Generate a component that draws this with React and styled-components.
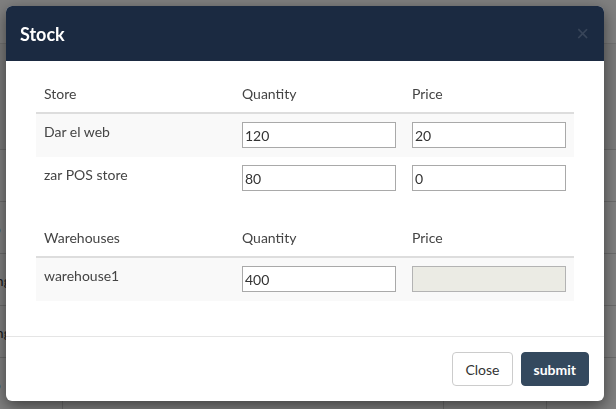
import React from 'react';
import styled, { createGlobalStyle } from 'styled-components';

const GlobalStyle = createGlobalStyle`
  html, body {
    margin: 0;
    padding: 0;
    height: 100%;
    overflow: hidden;
    background: #ffffff;
    font-family: 'Lato', 'Liberation Sans', sans-serif;
    font-size: 14px;
    color: #333;
  }
  * { box-sizing: border-box; }
`;

// page behind the modal
const Page = styled.div`
  width: 616px;
  height: 409px;
  overflow: hidden;
  display: flex;
  flex-direction: column;
`;

const TopBar = styled.div`
  height: 60px;
  background: #ffffff;
  border-bottom: 1px solid #e2e2e2;
`;

const PageBody = styled.div`
  flex: 1;
  background: #f4f4f4;
  padding-top: 105px;
  margin-left: -54px;
`;

const BgTable = styled.div`
  display: grid;
  grid-template-columns: 116px 381px 103px 120px;
`;

const BgCell = styled.div`
  height: 52px;
  padding: 18px 10px 0;
  border-top: 1px solid #d6d6d6;
  border-left: ${(p) => (p.first ? 'none' : '1px solid #d6d6d6')};
  background: #ffffff;
  color: #333;
  white-space: nowrap;
  overflow: hidden;
  text-align: ${(p) => (p.right ? 'right' : 'left')};
`;

// modal
const Overlay = styled.div`
  position: fixed;
  inset: 0;
  background: rgba(0, 0, 0, 0.5);
  padding: 6px 0 0 6px;
`;

const Modal = styled.div`
  width: 598px;
  background: #ffffff;
  border-radius: 6px;
  box-shadow: 0 5px 15px rgba(0, 0, 0, 0.5);
  overflow: hidden;
`;

const Header = styled.div`
  height: 55px;
  background: #1b2a41;
  display: flex;
  align-items: center;
  justify-content: space-between;
  padding: 0 15px 0 14px;
`;

const Title = styled.h4`
  margin: 0;
  color: #ffffff;
  font-size: 18px;
  font-weight: 700;
  line-height: 1;
`;

const CloseX = styled.span`
  color: rgba(255, 255, 255, 0.13);
  font-size: 22px;
  font-weight: 400;
  line-height: 1;
  font-family: 'Liberation Sans', sans-serif;
`;

const Body = styled.div`
  padding: 15px 30px;
`;

const Table = styled.table`
  width: 100%;
  border-collapse: collapse;
  margin-bottom: 20px;
  table-layout: fixed;
`;

const Th = styled.th`
  width: ${(p) => p.w}px;
  padding: 8px;
  text-align: left;
  font-weight: 400;
  line-height: 20px;
  color: #444;
  border-bottom: 2px solid #dddddd;
`;

const Tr = styled.tr`
  background: ${(p) => (p.striped ? '#f9f9f9' : '#ffffff')};
  & + & td {
    border-top: 1px solid #dddddd;
  }
`;

const Td = styled.td`
  padding: 8px 8px 9px;
  vertical-align: top;
  line-height: 20px;
  color: #444;
`;

const Input = styled.input`
  display: block;
  width: 100%;
  height: 26px;
  margin: 0;
  padding: 0 2px;
  border: 1px solid #a9a9a9;
  background: #ffffff;
  font-family: 'Lato', 'Liberation Sans', sans-serif;
  font-size: 14px;
  color: #333;
  outline: none;

  &:disabled {
    background: #ebebe4;
    border-color: #b3b3b3;
  }
`;

const Footer = styled.div`
  border-top: 1px solid #e5e5e5;
  padding: 15px;
  display: flex;
  justify-content: flex-end;
  gap: 8px;
`;

const Button = styled.button`
  height: 34px;
  padding: 0 12px;
  border-radius: 4px;
  font-family: 'Lato', 'Liberation Sans', sans-serif;
  font-size: 14px;
  cursor: pointer;
  border: 1px solid ${(p) => (p.primary ? '#34495e' : '#cccccc')};
  background: ${(p) => (p.primary ? '#34495e' : '#ffffff')};
  color: ${(p) => (p.primary ? '#ffffff' : '#333333')};
  font-weight: ${(p) => (p.primary ? 700 : 400)};
`;

const stores = [
  { name: 'Dar el web', qty: '120', price: '20' },
  { name: 'zar POS store', qty: '80', price: '0' },
];

const warehouses = [{ name: 'warehouse1', qty: '400' }];

const bgRows = [
  ['Dell', 'Laptop', '20.0', '25.0'],
  ['Lenovo', 'Phone', '12.0', '15.0'],
  ['Samsung', 'Mouse', '5.0', '8.0'],
  ['Samsung', 'Printer', '30.0', '40.0'],
  ['Lenovo', 'computer desktop, HP, i7, 16Go RAM, 1To', '20.0', '30.0'],
];

export default function App() {
  return (
    <>
      <GlobalStyle />
      <Page>
        <TopBar />
        <PageBody>
          <BgTable>
            {bgRows.map((r, i) => (
              <React.Fragment key={i}>
                <BgCell first>{r[0]}</BgCell>
                <BgCell>{r[1]}</BgCell>
                <BgCell right>{r[2]}</BgCell>
                <BgCell right>{r[3]}</BgCell>
              </React.Fragment>
            ))}
          </BgTable>
        </PageBody>
      </Page>

      <Overlay>
        <Modal>
          <Header>
            <Title>Stock</Title>
            <CloseX>×</CloseX>
          </Header>
          <Body>
            <Table>
              <thead>
                <tr>
                  <Th w={198}>Store</Th>
                  <Th w={170}>Quantity</Th>
                  <Th w={170}>Price</Th>
                </tr>
              </thead>
              <tbody>
                {stores.map((s, i) => (
                  <Tr key={s.name} striped={i % 2 === 0}>
                    <Td>{s.name}</Td>
                    <Td><Input defaultValue={s.qty} /></Td>
                    <Td><Input defaultValue={s.price} /></Td>
                  </Tr>
                ))}
              </tbody>
            </Table>
            <Table>
              <thead>
                <tr>
                  <Th w={198}>Warehouses</Th>
                  <Th w={170}>Quantity</Th>
                  <Th w={170}>Price</Th>
                </tr>
              </thead>
              <tbody>
                {warehouses.map((w, i) => (
                  <Tr key={w.name} striped={i % 2 === 0}>
                    <Td>{w.name}</Td>
                    <Td><Input defaultValue={w.qty} /></Td>
                    <Td><Input disabled /></Td>
                  </Tr>
                ))}
              </tbody>
            </Table>
          </Body>
          <Footer>
            <Button>Close</Button>
            <Button primary>submit</Button>
          </Footer>
        </Modal>
      </Overlay>
    </>
  );
}
